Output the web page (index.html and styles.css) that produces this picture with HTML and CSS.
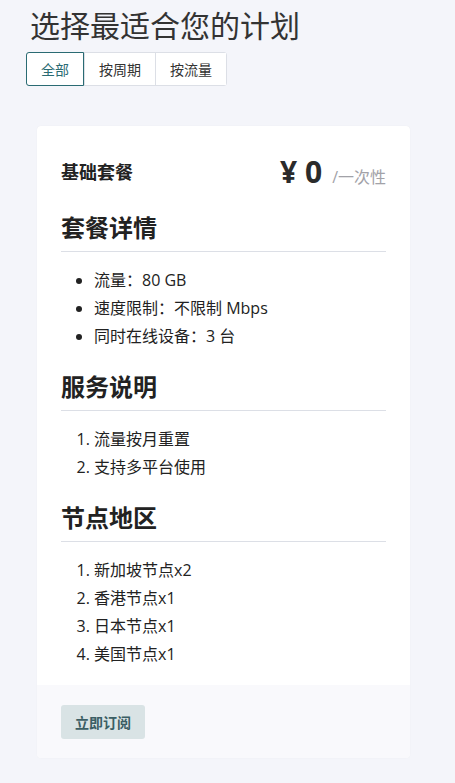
FILE: index.html
```html
<!DOCTYPE html>
<html lang="zh">
<head>
<meta charset="utf-8">
<link rel="stylesheet" href="styles.css">
</head>
<body>
<div class="page">
  <h1 class="title">选择最适合您的计划</h1>
  <div class="tabs">
    <button class="tab active">全部</button>
    <button class="tab">按周期</button>
    <button class="tab">按流量</button>
  </div>
  <div class="card">
    <div class="card-body">
      <div class="card-head">
        <div class="plan-name">基础套餐</div>
        <div class="price"><span class="amount">¥ 0</span><span class="period">/一次性</span></div>
      </div>
      <h3 class="sec first">套餐详情</h3>
      <ul class="list">
        <li>流量：80 GB</li>
        <li>速度限制：不限制 Mbps</li>
        <li>同时在线设备：3 台</li>
      </ul>
      <h3 class="sec">服务说明</h3>
      <ol class="list">
        <li>流量按月重置</li>
        <li>支持多平台使用</li>
      </ol>
      <h3 class="sec">节点地区</h3>
      <ol class="list">
        <li>新加坡节点x2</li>
        <li>香港节点x1</li>
        <li>日本节点x1</li>
        <li>美国节点x1</li>
      </ol>
    </div>
    <div class="card-foot">
      <button class="subscribe">立即订阅</button>
    </div>
  </div>
</div>
</body>
</html>
```
FILE: styles.css
```css
html, body {
  margin: 0;
  padding: 0;
  background: #f4f5fa;
}
body {
  font-family: "Open Sans", "Noto Sans CJK SC", sans-serif;
  color: #222;
}
.page {
  padding: 0 45px 25px 26px;
}
.title {
  margin: 0;
  padding: 6px 0 0 4px;
  font-size: 30px;
  font-weight: 400;
  line-height: 40px;
  color: #333;
}
.tabs {
  display: inline-flex;
  margin-top: 6px;
  background: #fff;
  border: 1px solid #dcdfe6;
  border-radius: 3px;
}
.tab {
  font-family: inherit;
  font-size: 14px;
  color: #333;
  background: #fff;
  border: none;
  border-left: 1px solid #dcdfe6;
  height: 32px;
  padding: 0 14px;
  margin: 0;
  cursor: pointer;
}
.tab:first-child {
  border-left: none;
}
.tab.active {
  color: #2a6b73;
  border: 1px solid #2a6b73;
  margin: -1px 0 -1px -1px;
  height: 34px;
  border-radius: 3px 0 0 3px;
  padding: 0 14px;
}
.card {
  margin: 40px 0 0 11px;
  background: #fff;
  border-radius: 4px;
  box-shadow: 0 0 1px rgba(0,0,0,0.08);
  overflow: hidden;
}
.card-body {
  padding: 24px 24px 17px 24px;
}
.card-head {
  display: flex;
  justify-content: space-between;
  align-items: center;
  height: 42px;
}
.plan-name {
  font-size: 18px;
  font-weight: 600;
  color: #222;
}
.price {
  display: flex;
  align-items: baseline;
}
.amount {
  font-size: 30px;
  font-weight: 700;
  color: #2b2b2b;
}
.period {
  font-size: 16px;
  color: #a2a2a8;
  margin-left: 10px;
}
.sec {
  margin: 22px 0 14px 0;
  font-size: 24px;
  font-weight: 700;
  line-height: 30px;
  padding-bottom: 8px;
  border-bottom: 1px solid #dcdfe6;
  color: #222;
}
.sec.first {
  margin-top: 21px;
}
.list {
  margin: 0;
  padding-left: 33px;
  font-size: 16px;
  line-height: 28px;
  color: #222;
}
.card-foot {
  background: #f9f9fc;
  padding: 20px 24px 19px 24px;
}
.subscribe {
  font-family: inherit;
  font-size: 14px;
  font-weight: 700;
  color: #3b5e64;
  background: #d9e3e5;
  border: none;
  border-radius: 3px;
  height: 34px;
  padding: 0 14px;
  cursor: pointer;
}
```
